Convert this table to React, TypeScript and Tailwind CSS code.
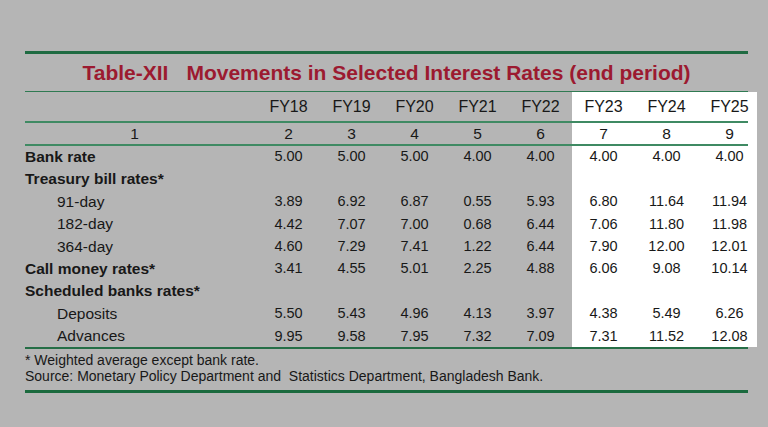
import * as React from 'react';

type Row = {
  label: string;
  kind: 'head' | 'sub';
  values: string[];
};

const years = ['FY18', 'FY19', 'FY20', 'FY21', 'FY22', 'FY23', 'FY24', 'FY25'];
const colNums = ['2', '3', '4', '5', '6', '7', '8', '9'];

const rows: Row[] = [
  { label: 'Bank rate', kind: 'head', values: ['5.00', '5.00', '5.00', '4.00', '4.00', '4.00', '4.00', '4.00'] },
  { label: 'Treasury bill rates*', kind: 'head', values: [] },
  { label: '91-day', kind: 'sub', values: ['3.89', '6.92', '6.87', '0.55', '5.93', '6.80', '11.64', '11.94'] },
  { label: '182-day', kind: 'sub', values: ['4.42', '7.07', '7.00', '0.68', '6.44', '7.06', '11.80', '11.98'] },
  { label: '364-day', kind: 'sub', values: ['4.60', '7.29', '7.41', '1.22', '6.44', '7.90', '12.00', '12.01'] },
  { label: 'Call money rates*', kind: 'head', values: ['3.41', '4.55', '5.01', '2.25', '4.88', '6.06', '9.08', '10.14'] },
  { label: 'Scheduled banks rates*', kind: 'head', values: [] },
  { label: 'Deposits', kind: 'sub', values: ['5.50', '5.43', '4.96', '4.13', '3.97', '4.38', '5.49', '6.26'] },
  { label: 'Advances', kind: 'sub', values: ['9.95', '9.58', '7.95', '7.32', '7.09', '7.31', '11.52', '12.08'] },
];

// one table line: label column, five grey years, then the white FY23-FY25 block
const TableRow = ({ label, cells, height, labelClass }: { label: React.ReactNode; cells: string[]; height: string; labelClass: string }) => {
  const c = (i: number) => cells[i] ?? '';
  return (
    <div className={`flex ${height}`}>
      <div className={`w-[219px] flex items-center ${labelClass}`}>{label}</div>
      {[0, 1, 2, 3, 4].map(i => (
        <div key={i} className="w-[63px] pl-[26px] flex items-center justify-center">{c(i)}</div>
      ))}
      <div className="ml-[13px] w-[185px] bg-white flex">
        <div className="w-[50px] pl-[13px] flex items-center justify-center">{c(5)}</div>
        <div className="w-[63px] pl-[26px] flex items-center justify-center">{c(6)}</div>
        <div className="w-[72px] pl-[26px] pr-[9px] flex items-center justify-center">{c(7)}</div>
      </div>
    </div>
  );
};

const Rule = ({ white }: { white?: boolean }) => (
  <div className="flex">
    <div className="w-[723px] h-[1.5px] bg-[#3f8a63]" />
    {white && <div className="ml-[0px] w-[9px] bg-white" />}
  </div>
);

export default function App() {
  return (
    <div className="w-[768px] h-[427px] bg-[#b5b5b5] overflow-hidden font-['Liberation_Sans',Arial,sans-serif] text-[#181818]">
      <div className="ml-[25px] pt-[51px] w-[732px]">
        <div className="w-[723px] h-[2.5px] bg-[#1f6b42]" />

        <div className="w-[723px] h-[37px] flex items-center justify-center text-[21px] font-bold text-[#9c1a30] leading-none">
          <span>Table-XII</span>
          <span className="ml-[18px]">Movements in Selected Interest Rates (end period)</span>
        </div>

        <div className="w-[723px] h-[1.5px] bg-[#2f7a52]" />

        <div className="text-[16px] leading-none">
          <TableRow label="" cells={years} height="h-[29px]" labelClass="" />
        </div>
        <Rule white />
        <div className="text-[15.5px] leading-none">
          <TableRow label={<span className="w-full text-center">1</span>} cells={colNums} height="h-[21.5px]" labelClass="" />
        </div>
        <Rule white />

        <div className="text-[14.5px] leading-none">
          {rows.map(r => (
            <TableRow
              key={r.label}
              label={r.label}
              cells={r.values}
              height="h-[22.4px]"
              labelClass={r.kind === 'head' ? 'font-bold text-[15.5px]' : 'pl-[32px] text-[15.5px]'}
            />
          ))}
        </div>

        <div className="w-[723px] h-[2px] bg-[#256e46]" />

        <div className="pt-[4px] text-[14px] leading-[15.5px]">
          <p>* Weighted average except bank rate.</p>
          <p>Source: Monetary Policy Department and&nbsp; Statistics Department, Bangladesh Bank.</p>
        </div>

        <div className="mt-[6px] w-[723px] h-[3px] bg-[#1b6a3e]" />
      </div>
    </div>
  );
}
